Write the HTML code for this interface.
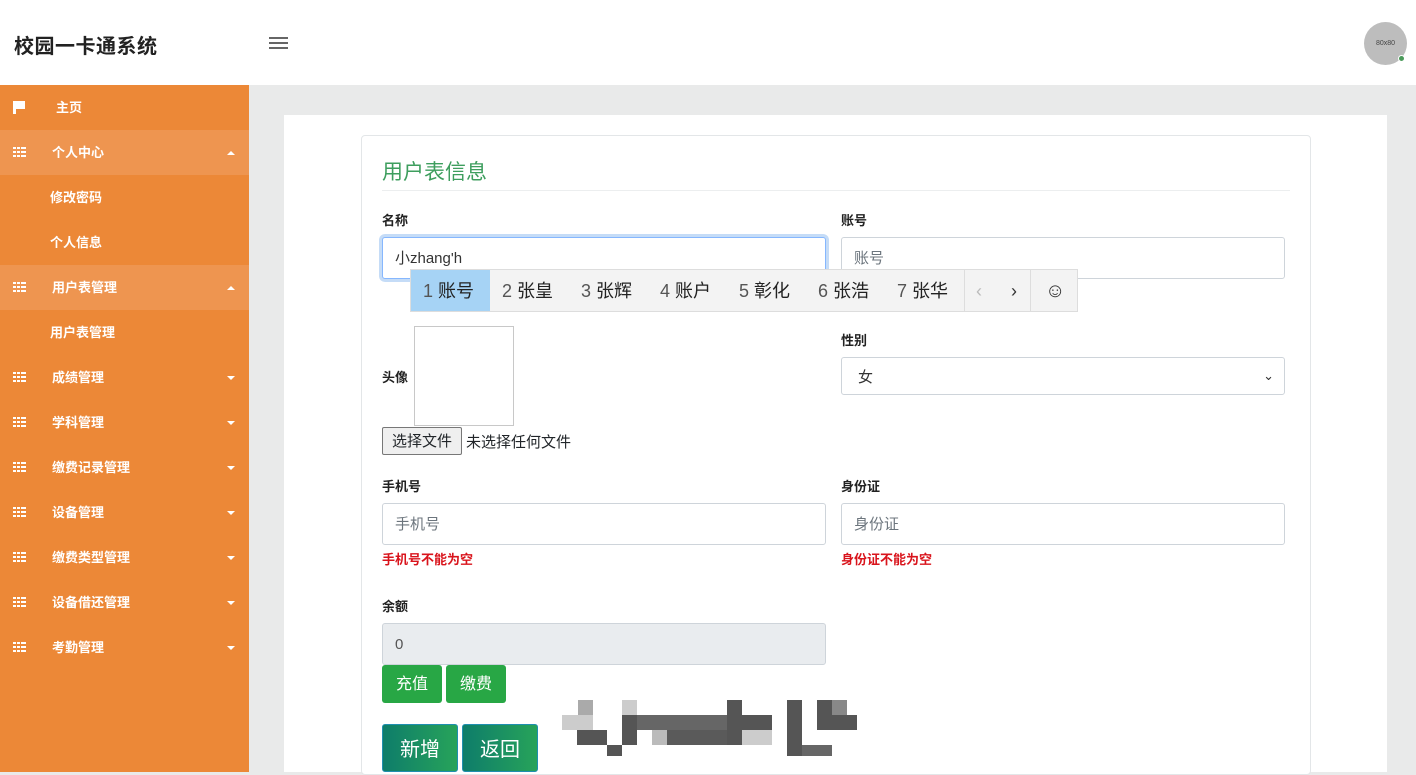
<!DOCTYPE html>
<html><head><meta charset="utf-8"><style>
*{box-sizing:border-box;margin:0;padding:0}
body{width:1416px;height:772px;overflow:hidden;position:relative;background:#e9eaea;font-family:"Liberation Sans","Noto Sans CJK SC",sans-serif;color:#212529}
.a{position:absolute}
.hdr{left:0;top:0;width:1416px;height:85px;background:#fff}
.side{left:0;top:85px;width:249px;height:687px;background:#ec8837}
.it{position:absolute;left:0;width:249px;height:45px;color:#fff;font-size:13px;font-weight:bold;line-height:45px}
.it.l{background:#ee9550}
.it .ic{position:absolute;left:13px;top:17px;width:13px;height:10px;background:
linear-gradient(#fff,#fff) 0 0/13px 2px no-repeat,linear-gradient(#fff,#fff) 0 4px/13px 2px no-repeat,linear-gradient(#fff,#fff) 0 8px/13px 2px no-repeat}
.it .ic:after{content:"";position:absolute;left:3px;top:0;width:1px;height:10px;background:#ec8837;box-shadow:4px 0 0 #ec8837}
.it.l .ic:after{background:#ee9550;box-shadow:4px 0 0 #ee9550}
.it .t{position:absolute;left:52px}
.it .c{position:absolute;left:227px;top:21px;width:0;height:0;border-left:4px solid transparent;border-right:4px solid transparent;border-top:4px solid #fff}
.it .c.u{border-top:0;border-bottom:4px solid #fff}
.panel{left:284px;top:115px;width:1103px;height:657px;background:#fff}
.card{left:361px;top:135px;width:950px;height:640px;border:1px solid #e3e6e8;border-radius:4px;background:#fff}
.lbl{font-size:13px;font-weight:bold;color:#222}
.inp{height:42px;border:1px solid #ced4da;border-radius:3px;background:#fff;font-size:15px;color:#6c757d;padding-left:12px;line-height:42px}
.err{font-size:13px;font-weight:bold;color:#d9141c}
.btn{color:#fff;border-radius:3px;text-align:center}
</style></head><body>
<div class="a hdr"></div>
<div class="a" style="left:14px;top:30px;font-size:20px;font-weight:bold;color:#222;letter-spacing:0.5px">校园一卡通系统</div>
<div class="a" style="left:269px;top:37px;width:19px;height:2px;background:#666;box-shadow:0 5px 0 #666,0 10px 0 #666"></div>
<div class="a" style="left:1364px;top:22px;width:43px;height:43px;border-radius:50%;background:#bdbdbd;font-size:7px;color:#444;text-align:center;line-height:43px">80x80</div>
<div class="a" style="left:1398px;top:55px;width:7px;height:7px;border-radius:50%;background:#4a9a5a;border:1px solid #fff"></div>

<div class="a side">
<div class="it" style="top:0"><span style="position:absolute;left:13px;top:16px;width:3px;height:13px;background:#fff"></span><span style="position:absolute;left:15px;top:16px;width:10px;height:8px;background:#fff"></span><span class="t" style="left:56px">主页</span></div>
<div class="it l" style="top:45px"><span class="ic"></span><span class="t">个人中心</span><span class="c u"></span></div>
<div class="it" style="top:90px"><span class="t" style="left:50px">修改密码</span></div>
<div class="it" style="top:135px"><span class="t" style="left:50px">个人信息</span></div>
<div class="it l" style="top:180px"><span class="ic"></span><span class="t">用户表管理</span><span class="c u"></span></div>
<div class="it" style="top:225px"><span class="t" style="left:50px">用户表管理</span></div>
<div class="it" style="top:270px"><span class="ic"></span><span class="t">成绩管理</span><span class="c"></span></div>
<div class="it" style="top:315px"><span class="ic"></span><span class="t">学科管理</span><span class="c"></span></div>
<div class="it" style="top:360px"><span class="ic"></span><span class="t">缴费记录管理</span><span class="c"></span></div>
<div class="it" style="top:405px"><span class="ic"></span><span class="t">设备管理</span><span class="c"></span></div>
<div class="it" style="top:450px"><span class="ic"></span><span class="t">缴费类型管理</span><span class="c"></span></div>
<div class="it" style="top:495px"><span class="ic"></span><span class="t">设备借还管理</span><span class="c"></span></div>
<div class="it" style="top:540px"><span class="ic"></span><span class="t">考勤管理</span><span class="c"></span></div>
</div>

<div class="a panel"></div>
<div class="a card"></div>
<div class="a" style="left:382px;top:156px;font-size:21px;color:#3e9e5e">用户表信息</div>
<div class="a" style="left:382px;top:190px;width:908px;height:1px;background:#eceeef"></div>

<div class="a lbl" style="left:382px;top:210px">名称</div>
<div class="a lbl" style="left:841px;top:210px">账号</div>
<div class="a inp" style="left:382px;top:237px;width:444px;border-color:#86b7fe;box-shadow:0 0 0 3px #c5dcf7;color:#333">小zhang'h</div>
<div class="a inp" style="left:841px;top:237px;width:444px">账号</div>

<div class="a" style="left:410px;top:269px;width:668px;height:43px;background:#f3f3f3;border:1px solid #ddd;font-size:18px;line-height:43px;color:#222">
<span class="a" style="left:0;top:0;width:79px;height:41px;background:#a6d3f5"></span>
<span class="a" style="left:12px"><span style="color:#555">1</span> 账号</span>
<span class="a" style="left:91px"><span style="color:#555">2</span> 张皇</span>
<span class="a" style="left:170px"><span style="color:#555">3</span> 张辉</span>
<span class="a" style="left:249px"><span style="color:#555">4</span> 账户</span>
<span class="a" style="left:328px"><span style="color:#555">5</span> 彰化</span>
<span class="a" style="left:407px"><span style="color:#555">6</span> 张浩</span>
<span class="a" style="left:486px"><span style="color:#555">7</span> 张华</span>
<span class="a" style="left:553px;top:0;width:1px;height:41px;background:#ddd"></span>
<span class="a" style="left:565px;color:#bbb">‹</span>
<span class="a" style="left:600px;color:#333">›</span>
<span class="a" style="left:619px;top:0;width:1px;height:41px;background:#ddd"></span>
<span class="a" style="left:634px;color:#333;font-size:20px">☺</span>
</div>

<div class="a lbl" style="left:382px;top:367px">头像</div>
<div class="a" style="left:414px;top:326px;width:100px;height:100px;border:1px solid #c8c8c8"></div>
<div class="a" style="left:382px;top:427px;width:80px;height:28px;border:1px solid #777;border-radius:2px;background:#efefef;font-size:15px;line-height:28px;text-align:center">选择文件</div>
<div class="a" style="left:466px;top:431px;font-size:15px">未选择任何文件</div>

<div class="a lbl" style="left:841px;top:330px">性别</div>
<div class="a inp" style="left:841px;top:357px;width:444px;height:38px;line-height:40px;color:#333;padding-left:16px">女<span style="position:absolute;right:10px;top:-2px;font-size:13px">⌄</span></div>

<div class="a lbl" style="left:382px;top:476px">手机号</div>
<div class="a lbl" style="left:841px;top:476px">身份证</div>
<div class="a inp" style="left:382px;top:503px;width:444px">手机号</div>
<div class="a inp" style="left:841px;top:503px;width:444px">身份证</div>
<div class="a err" style="left:382px;top:549px">手机号不能为空</div>
<div class="a err" style="left:841px;top:549px">身份证不能为空</div>

<div class="a lbl" style="left:382px;top:596px">余额</div>
<div class="a inp" style="left:382px;top:623px;width:444px;background:#e9ecef;color:#555">0</div>
<div class="a btn" style="left:382px;top:665px;width:60px;height:38px;background:#28a745;font-size:16px;line-height:40px">充值</div>
<div class="a btn" style="left:446px;top:665px;width:60px;height:38px;background:#28a745;font-size:16px;line-height:40px">缴费</div>
<div class="a btn" style="left:382px;top:724px;width:76px;height:48px;background:linear-gradient(90deg,#0e7d6a,#27a35a);font-size:20px;line-height:50px;border:1px solid #1f8fb0">新增</div>
<div class="a btn" style="left:462px;top:724px;width:76px;height:48px;background:linear-gradient(90deg,#0e7d6a,#27a35a);font-size:20px;line-height:50px;border:1px solid #1f8fb0">返回</div>

<div class="a" style="left:562px;top:700px;width:298px;height:56px">
<div class="a" style="left:16px;top:0;width:15px;height:15px;background:#aaa"></div>
<div class="a" style="left:0;top:15px;width:31px;height:15px;background:#ccc"></div>
<div class="a" style="left:15px;top:30px;width:30px;height:15px;background:#555"></div>
<div class="a" style="left:45px;top:45px;width:15px;height:11px;background:#555"></div>
<div class="a" style="left:60px;top:15px;width:15px;height:30px;background:#555"></div>
<div class="a" style="left:60px;top:0;width:15px;height:15px;background:#ccc"></div>
<div class="a" style="left:75px;top:15px;width:90px;height:15px;background:#666"></div>
<div class="a" style="left:105px;top:30px;width:60px;height:15px;background:#5a5a5a"></div>
<div class="a" style="left:90px;top:30px;width:15px;height:15px;background:#bbb"></div>
<div class="a" style="left:165px;top:0;width:15px;height:45px;background:#555"></div>
<div class="a" style="left:180px;top:15px;width:30px;height:15px;background:#555"></div>
<div class="a" style="left:180px;top:30px;width:30px;height:15px;background:#ccc"></div>
<div class="a" style="left:225px;top:0;width:15px;height:56px;background:#555"></div>
<div class="a" style="left:240px;top:45px;width:30px;height:11px;background:#666"></div>
<div class="a" style="left:255px;top:0;width:15px;height:30px;background:#555"></div>
<div class="a" style="left:270px;top:15px;width:25px;height:15px;background:#555"></div>
<div class="a" style="left:270px;top:0;width:15px;height:15px;background:#888"></div>
</div>
</body></html>
